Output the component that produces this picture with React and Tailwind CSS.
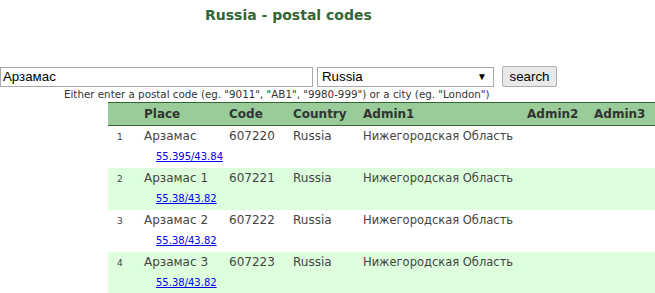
const ROWS = [
  { n: 1, place: "Арзамас", code: "607220", coords: "55.395/43.84" },
  { n: 2, place: "Арзамас 1", code: "607221", coords: "55.38/43.82" },
  { n: 3, place: "Арзамас 2", code: "607222", coords: "55.38/43.82" },
  { n: 4, place: "Арзамас 3", code: "607223", coords: "55.38/43.82" },
];

const verdana = { fontFamily: '"DejaVu Sans", Verdana, sans-serif' };
const arial = { fontFamily: '"Liberation Sans", Arial, sans-serif' };

function Cols({ num, place, code, country, admin1, admin2, admin3 }) {
  return (
    <div className="flex">
      <div className="w-[36px] shrink-0">{num}</div>
      <div className="w-[85px] shrink-0">{place}</div>
      <div className="w-[64px] shrink-0">{code}</div>
      <div className="w-[70px] shrink-0">{country}</div>
      <div className="w-[164px] shrink-0">{admin1}</div>
      <div className="w-[67px] shrink-0">{admin2}</div>
      <div className="flex-1">{admin3}</div>
    </div>
  );
}

export default function App() {
  return (
    <div className="h-[293px] w-[655px] overflow-hidden bg-white" style={verdana}>
      <div className="flex h-[31px] items-center pl-[205px] text-[14px] font-bold text-[#336633]">
        Russia - postal codes
      </div>

      <div className="mt-[35px] flex items-center" style={arial}>
        <div className="flex h-[20px] w-[313px] items-center border border-[#a9a9a9] px-[2px] text-[13.3px] text-black">
          Арзамас
        </div>
        <div className="ml-[4px] flex h-[20px] w-[177px] items-center justify-between border border-[#a9a9a9] pl-[4px] pr-[6px] text-[13.3px] text-black">
          <span>Russia</span>
          <span className="text-[10px]">▼</span>
        </div>
        <div className="ml-[8px] flex h-[21px] w-[55px] items-center justify-center rounded-[2px] border border-[#adadad] bg-[#e9e9e9] text-[13.3px] text-black">
          search
        </div>
      </div>

      <div className="mt-[1px] pl-[64px] text-[10.3px] leading-[12px] text-[#333]">
        Either enter a postal code (eg. "9011", "AB1", "9980-999") or a city (eg. "London")
      </div>

      <div className="ml-[108px] mt-[2px]">
        <div className="flex h-[24px] items-center border-y border-[#336633] bg-[#99cc99] text-[12px] font-bold text-[#333]">
          <div className="w-full">
            <Cols
              num=""
              place="Place"
              code="Code"
              country="Country"
              admin1="Admin1"
              admin2="Admin2"
              admin3="Admin3"
            />
          </div>
        </div>
        {ROWS.map((r) => (
          <div
            key={r.n}
            className={"h-[42px] text-[12px] text-[#444] " + (r.n % 2 === 0 ? "bg-[#ddffdd]" : "bg-white")}
          >
            <div className="pt-[2px] leading-[16px]">
              <Cols
                num={<span className="pl-[9px] text-[9px]">{r.n}</span>}
                place={r.place}
                code={r.code}
                country="Russia"
                admin1={<span className="text-[11.5px]">Нижегородская Область</span>}
                admin2=""
                admin3=""
              />
            </div>
            <div className="pl-[48px] pt-[6px] text-[10px] leading-[12px]">
              <a href="#" className="text-[#0000ee] underline">
                {r.coords}
              </a>
            </div>
          </div>
        ))}
      </div>
    </div>
  );
}
